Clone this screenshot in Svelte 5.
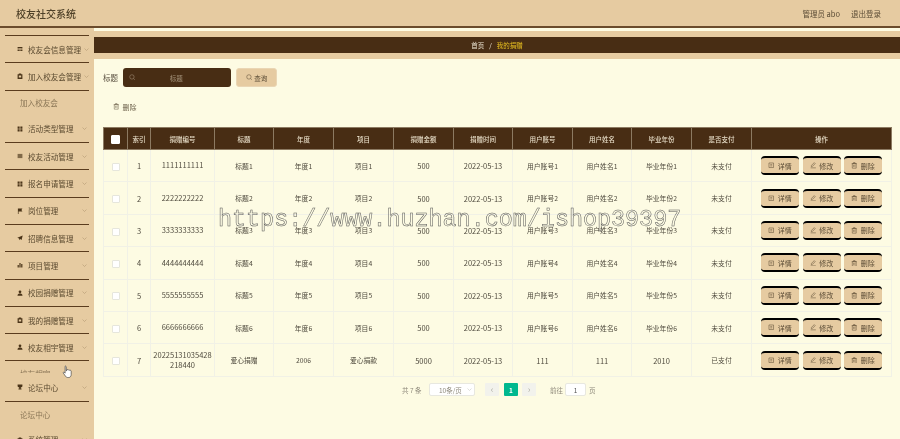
<script>
  const menu = [
    { t: "校友会信息管理", icon: "grid2", line: true, tight: true },
    { t: "加入校友会管理", icon: "box", line: true, tight: true },
    { t: "加入校友会", sub: true, line: true },
    { t: "活动类型管理", icon: "grid", tall: true },
    { t: "校友活动管理", icon: "lines", line: true },
    { t: "报名申请管理", icon: "grid", line: true },
    { t: "岗位管理", icon: "flag", line: true },
    { t: "招聘信息管理", icon: "plane", line: true },
    { t: "项目管理", icon: "bars", line: true },
    { t: "校园捐赠管理", icon: "user", line: true },
    { t: "我的捐赠管理", icon: "box", line: true },
    { t: "校友相宇管理", icon: "user", line: true },
    { t: "校友相宇", sub: true, line: true, clip: true },
    { t: "论坛中心", icon: "cup" },
    { t: "论坛中心", sub: true, line: true },
    { t: "系统管理", icon: "box" }
  ];

  const columns = ["索引", "捐赠编号", "标题", "年度", "项目", "捐赠金额", "捐赠时间", "用户账号", "用户姓名", "毕业年份", "是否支付"];

  const rows = [1, 2, 3, 4, 5, 6].map((n) => ({
    id: n,
    no: String(n).repeat(10),
    title: "标题" + n,
    year: "年度" + n,
    item: "项目" + n,
    amount: 500,
    date: "2022-05-13",
    account: "用户账号" + n,
    name: "用户姓名" + n,
    grad: "毕业年份" + n,
    paid: "未支付"
  }));
  rows.push({
    id: 7,
    no: "20225131035428218440",
    title: "爱心捐赠",
    year: "2006",
    item: "爱心捐款",
    amount: 5000,
    date: "2022-05-13",
    account: "111",
    name: "111",
    grad: "2010",
    paid: "已支付"
  });
</script>

{#snippet menuIcon(kind)}
  <svg class="micon" viewBox="0 0 10 10" aria-hidden="true">
    {#if kind === "grid"}
      <path d="M1 1h3.4v3.4H1zM5.6 1H9v3.4H5.6zM1 5.6h3.4V9H1zM5.6 5.6H9V9H5.6z" />
    {:else if kind === "grid2"}
      <path d="M1 1.5h8v2H1zM1 4.3h2.2v1.6H1zM3.9 4.3h2.2v1.6H3.9zM6.8 4.3H9v1.6H6.8zM1 6.7h2.2v1.8H1zM3.9 6.7h2.2v1.8H3.9zM6.8 6.7H9v1.8H6.8z" />
    {:else if kind === "box"}
      <path d="M3 1h4v1h2v8H1V2h2zM3 4v3.5h4V4z" />
    {:else if kind === "lines"}
      <path d="M1 1.5h8v7H1z" opacity="0.65" />
    {:else if kind === "flag"}
      <path d="M1.5 1h7.5l-1.6 2.4L9 5.8H2.6V10H1.5z" />
    {:else if kind === "plane"}
      <path d="M9.5 .8 7.6 8.4 5.2 6.7 4 8.8 3.4 5.8 .5 4.6z" />
    {:else if kind === "bars"}
      <path d="M1 5h2v4H1zM4 1.5h2V9H4zM7 3.5h2V9H7z" />
    {:else if kind === "user"}
      <path d="M5 .8a2.3 2.3 0 1 1 0 4.6 2.3 2.3 0 0 1 0-4.6zM.8 9.4c.3-2.4 2-3.4 4.2-3.4s3.900 1 4.200 3.400z" />
    {:else if kind === "cup"}
      <path d="M1 1h8v3.200L6.200 6.300V7.500H7.500V9h-5V7.500h1.300V6.300L1 4.200z" />
    {/if}
  </svg>
{/snippet}

{#snippet searchIcon()}
  <svg class="sicon" viewBox="0 0 10 10" aria-hidden="true">
    <circle cx="4.500" cy="4.500" r="3.400" />
    <path d="M7 7l2 2" />
  </svg>
{/snippet}

{#snippet trashIcon()}
  <svg class="sicon" viewBox="0 0 10 10" aria-hidden="true">
    <path d="M2 2.500h6V9.500H2zM1 2.500h8M3.800 2.500V.8h2.400v1.700M4 4.500v3M6 4.500v3" />
  </svg>
{/snippet}

<div class="page">
  <header class="topbar">
    <div class="brand">校友社交系统</div>
    <div class="user">
      <span>管理员 abo</span>
      <span>退出登录</span>
    </div>
  </header>

  <div class="body">
    <aside class="side">
      {#each menu as m}
        <div class="mitem" class:line={m.line} class:sub={m.sub} class:tight={m.tight} class:tall={m.tall} class:clip={m.clip}>
          {#if m.sub}
            <span class="mtext">{m.t}</span>
          {:else}
            {@render menuIcon(m.icon)}
            <span class="mtext">{m.t}</span>
            <svg class="chev" viewBox="0 0 10 6" aria-hidden="true"><path d="M1 1l4 4 4-4" /></svg>
          {/if}
        </div>
      {/each}
    </aside>

    <main class="main">
      <div class="crumbbar">
        <div class="crumbs">
          <span>首页</span>
          <b>/</b>
          <span class="cur">我的捐赠</span>
        </div>
      </div>

      <div class="content">
        <div class="search">
          <span class="slabel">标题</span>
          <div class="sinput">
            {@render searchIcon()}
            <span>标题</span>
          </div>
          <button class="sbtn">{@render searchIcon()}查询</button>
        </div>

        <button class="delbtn">{@render trashIcon()}删除</button>

        <table>
          <colgroup>
            <col style="width:24px" />
            <col style="width:23px" />
            <col style="width:64px" />
            <col style="width:59px" />
            <col style="width:60px" />
            <col style="width:60px" />
            <col style="width:60px" />
            <col style="width:59px" />
            <col style="width:60px" />
            <col style="width:59px" />
            <col style="width:60px" />
            <col style="width:60px" />
            <col />
          </colgroup>
          <thead>
            <tr>
              <th><span class="check head"></span></th>
              {#each columns as c}
                <th>{c}</th>
              {/each}
              <th>操作</th>
            </tr>
          </thead>
          <tbody>
            {#each rows as r}
              <tr>
                <td><span class="check"></span></td>
                <td class="big">{r.id}</td>
                <td class="no">{r.no}</td>
                <td>{r.title}</td>
                <td>{r.year}</td>
                <td>{r.item}</td>
                <td class="big">{r.amount}</td>
                <td class="big">{r.date}</td>
                <td class:big={r.id === 7}>{r.account}</td>
                <td class:big={r.id === 7}>{r.name}</td>
                <td class:big={r.id === 7}>{r.grad}</td>
                <td>{r.paid}</td>
                <td>
                  <div class="ops">
                    <button class="op">
                      <svg class="sicon" viewBox="0 0 10 10" aria-hidden="true"><path d="M1.500 1.500h7v7h-7zM3.500 4h3M3.500 6h3" /></svg>详情
                    </button>
                    <button class="op">
                      <svg class="sicon" viewBox="0 0 10 10" aria-hidden="true"><path d="M1 9h8M2 7l.3-1.800L6.500 1l1.500 1.500L3.800 6.700z" /></svg>修改
                    </button>
                    <button class="op">{@render trashIcon()}删除</button>
                  </div>
                </td>
              </tr>
            {/each}
          </tbody>
        </table>

        <div class="pager">
          <span class="total">共 7 条</span>
          <div class="psize">
            <span>10条/页</span>
            <svg class="pchev" viewBox="0 0 10 6" aria-hidden="true"><path d="M1 1l4 4 4-4" /></svg>
          </div>
          <span class="pnav">‹</span>
          <span class="pnum">1</span>
          <span class="pnav">›</span>
          <span class="goto">前往</span>
          <span class="pinput">1</span>
          <span class="unit">页</span>
        </div>
      </div>
    </main>
  </div>

  <div class="watermark">https://www.huzhan.com/ishop39397</div>

  <svg class="cursor" viewBox="0 0 12 16" aria-hidden="true">
    <path d="M3.500 1.200c.7 0 1.100.5 1.100 1.100v4.200h.5V5.600c.6-.6 1.500-.5 1.800.2.600-.5 1.500-.3 1.700.4.700-.3 1.600 0 1.600.9v3.800c0 1.700-1 3.400-2.800 3.400H6c-1.100 0-1.700-.6-2.300-1.500L1.200 9.200c-.4-.7.500-1.500 1.200-.9l.9 1V2.300c0-.6-.4-1.100.200-1.100z" />
  </svg>
</div>

<style>
  :global(body) {
    margin: 0;
    background: #fdfbe3;
  }

  .page {
    position: relative;
    width: 900px;
    height: 439px;
    overflow: hidden;
    font-family: "Noto Sans CJK SC", "Open Sans", sans-serif;
    color: #4a4a42;
    filter: blur(0.35px);
  }

  .topbar {
    height: 26px;
    background: #e6cba1;
    border-bottom: 2px solid #6b4c2c;
    display: flex;
    align-items: center;
    justify-content: space-between;
    padding: 0 19px 0 16px;
    box-sizing: content-box;
  }

  .brand {
    font-size: 10px;
    font-weight: 500;
    color: #4f4128;
  }

  .user {
    display: flex;
    gap: 11px;
    font-size: 7.500px;
    color: #5a4b35;
  }

  .body {
    display: flex;
    height: 411px;
  }

  .side {
    width: 94px;
    flex: none;
    background: #e6cba1;
    padding-top: 7px;
    box-sizing: border-box;
    overflow: hidden;
  }

  .mitem {
    height: 27.300px;
    margin: 0 5px;
    padding-left: 12px;
    display: flex;
    align-items: center;
    box-sizing: border-box;
    font-size: 7.600px;
    color: #5b4a30;
    position: relative;
  }

  .mitem.line {
    border-top: 1.500px solid #5a3c1e;
  }

  .mitem.sub {
    height: 25.500px;
    padding-left: 15px;
    color: #8a7656;
  }

  .mitem.tall {
    height: 27px;
  }

  .mitem.clip {
    height: 13px;
    overflow: hidden;
    align-items: flex-start;
    padding-top: 7px;
  }

  .micon {
    width: 6px;
    height: 6px;
    fill: #4a3418;
    margin-right: 5px;
    flex: none;
  }

  .chev {
    position: absolute;
    right: 2px;
    top: 50%;
    width: 5px;
    height: 3px;
    margin-top: -1.500px;
    fill: none;
    stroke: #a88f68;
    stroke-width: 1;
  }

  .mitem.tight .chev {
    right: 0;
  }

  .main {
    flex: 1;
    min-width: 0;
    display: flex;
    flex-direction: column;
  }

  .crumbbar {
    margin-top: 3px;
    background: #e6cba1;
    padding: 6px 0;
  }

  .crumbs {
    height: 16px;
    background: #482d14;
    display: flex;
    align-items: center;
    justify-content: center;
    gap: 5px;
    font-size: 6.500px;
    color: #eee6d4;
  }

  .crumbs b {
    font-weight: 400;
  }

  .crumbs .cur {
    color: #e8c020;
  }

  .content {
    flex: 1;
    padding: 9px 8px 0 9px;
    background: #fdfbe3;
  }

  .search {
    display: flex;
    align-items: center;
    height: 19px;
    font-size: 7.500px;
  }

  .slabel {
    width: 20px;
    color: #5a5040;
  }

  .sinput {
    width: 108px;
    height: 19px;
    background: #482d14;
    border-radius: 3px;
    display: flex;
    align-items: center;
    padding-left: 6px;
    box-sizing: border-box;
    color: #a8977f;
    font-size: 6.500px;
  }

  .sinput span {
    flex: 1;
    text-align: center;
    padding-right: 14px;
  }

  .sicon {
    width: 6.500px;
    height: 6.500px;
    fill: none;
    stroke: currentColor;
    stroke-width: 0.8;
    flex: none;
  }

  .sbtn {
    margin-left: 5px;
    width: 41px;
    height: 19px;
    border: 1px solid #ead6b4;
    border-radius: 3px;
    background: #e6cba1;
    color: #5a4b35;
    font: inherit;
    font-size: 6.500px;
    display: flex;
    align-items: center;
    justify-content: center;
    gap: 2px;
    padding: 0;
  }

  .delbtn {
    margin: 10px 0 0 10px;
    height: 19px;
    border: 0;
    background: none;
    color: #6a5e48;
    font: inherit;
    font-size: 7px;
    display: flex;
    align-items: center;
    gap: 3px;
    padding: 0;
  }

  table {
    margin-top: 11px;
    width: 789px;
    border-collapse: collapse;
    table-layout: fixed;
    font-size: 6.800px;
  }

  th {
    height: 21px;
    padding: 0;
    background: #482d14;
    color: #e6dcc6;
    font-weight: 500;
    font-size: 6.500px;
    border: 1px solid #8c7a62;
  }

  td {
    height: 32.400px;
    padding: 0;
    text-align: center;
    border: 1px solid #f1f1e6;
    color: #4f4a3e;
    box-sizing: border-box;
  }

  td.big {
    font-size: 7.500px;
  }

  td.no {
    font-size: 7.500px;
    line-height: 10.500px;
    word-break: break-all;
    padding: 0 2px;
  }

  .check {
    display: inline-block;
    width: 6px;
    height: 6px;
    background: #fff;
    border: 0.500px solid #e6e6dc;
    border-radius: 1px;
    vertical-align: middle;
  }

  .check.head {
    width: 6.500px;
    height: 6.500px;
    border-color: #fff;
  }

  .ops {
    display: flex;
    justify-content: center;
    gap: 3.500px;
  }

  .op {
    width: 38px;
    height: 19px;
    padding: 0;
    border: 0;
    border-top: 2px solid #000;
    border-bottom: 2px solid #000;
    border-radius: 4px;
    background: #e6cba1;
    color: #5a4b35;
    font: inherit;
    font-size: 7px;
    display: flex;
    align-items: center;
    justify-content: center;
    gap: 3px;
    box-sizing: border-box;
  }

  .pager {
    display: flex;
    align-items: center;
    margin: 6px 0 0 299px;
    height: 14px;
    font-size: 6.500px;
    color: #8d887a;
  }

  .total {
    width: 27px;
  }

  .psize {
    width: 46px;
    height: 13px;
    background: #fff;
    border: 0.500px solid #e8e8e0;
    border-radius: 2px;
    box-sizing: border-box;
    display: flex;
    align-items: center;
    justify-content: space-between;
    padding: 0 2px 0 9px;
  }

  .pchev {
    width: 5px;
    height: 3px;
    fill: none;
    stroke: #c0c0b8;
  }

  .pnav {
    width: 14px;
    height: 13px;
    margin-left: 10px;
    background: #f2f2ec;
    color: #b0b0a8;
    border-radius: 1px;
    display: flex;
    align-items: center;
    justify-content: center;
    font-size: 9px;
    line-height: 1;
  }

  .pnum {
    width: 14px;
    height: 13px;
    margin-left: 5px;
    background: #00b88f;
    color: #fff;
    border-radius: 1px;
    display: flex;
    align-items: center;
    justify-content: center;
    font-weight: 700;
  }

  .pnum + .pnav {
    margin-left: 4px;
  }

  .goto {
    margin-left: 14px;
    width: 15px;
  }

  .pinput {
    width: 21px;
    height: 13px;
    background: #fff;
    border: 0.500px solid #e8e8e0;
    border-radius: 2px;
    box-sizing: border-box;
    display: flex;
    align-items: center;
    justify-content: center;
    color: #555;
  }

  .unit {
    margin-left: 3px;
  }

  .watermark {
    position: absolute;
    left: 218px;
    top: 204px;
    font-family: "Liberation Mono", monospace;
    font-size: 23.400px;
    line-height: 32px;
    white-space: nowrap;
    color: transparent;
    -webkit-text-stroke: 0.500px #555;
    pointer-events: none;
  }

  .cursor {
    position: absolute;
    left: 62px;
    top: 365px;
    width: 11px;
    height: 14px;
    fill: #fff;
    stroke: #333;
    stroke-width: 0.700;
  }
</style>
